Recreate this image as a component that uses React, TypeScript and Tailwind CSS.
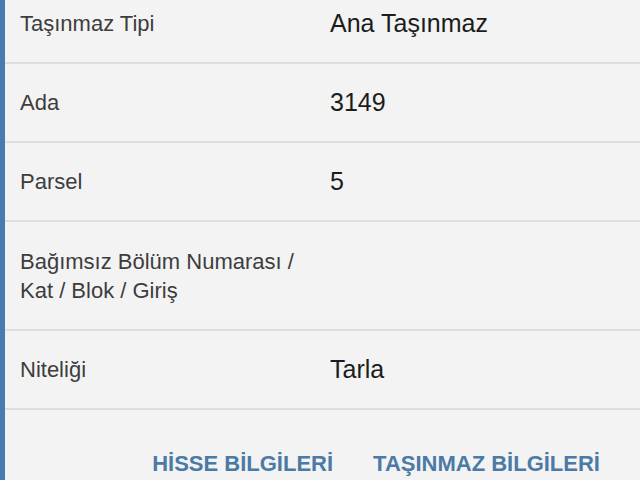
const rows: { label: string; value: string; tall?: boolean }[] = [
  { label: "Taşınmaz Tipi", value: "Ana Taşınmaz" },
  { label: "Ada", value: "3149" },
  { label: "Parsel", value: "5" },
  { label: "Bağımsız Bölüm Numarası / Kat / Blok / Giriş", value: "", tall: true },
  { label: "Niteliği", value: "Tarla" },
]

export default function App() {
  return (
    <div
      className="w-[640px] h-[480px] overflow-hidden bg-[#f3f3f3] border-l-[5px] border-[#4a7bb0]"
      style={{ fontFamily: '"Liberation Sans", Arial, sans-serif' }}
    >
      <div className="-mt-[15px]">
        {rows.map((row) => (
          <div
            key={row.label}
            className={`flex items-center border-b-2 border-[#dedede] ${row.tall ? "h-[109px]" : "h-[79px]"}`}
          >
            <div className="w-[325px] pl-[15px] pr-[20px] text-[22px] leading-[29px] text-[#3d3d3d]">
              {row.label}
            </div>
            <div className="text-[25px] text-[#1c1c1c]">{row.value}</div>
          </div>
        ))}
      </div>
      <div className="flex justify-end gap-10 pr-[40px] pt-[37px]">
        <span className="text-[22px] font-bold text-[#4c7aa6]">HİSSE BİLGİLERİ</span>
        <span className="text-[22px] font-bold text-[#4c7aa6]">TAŞINMAZ BİLGİLERİ</span>
      </div>
    </div>
  )
}
